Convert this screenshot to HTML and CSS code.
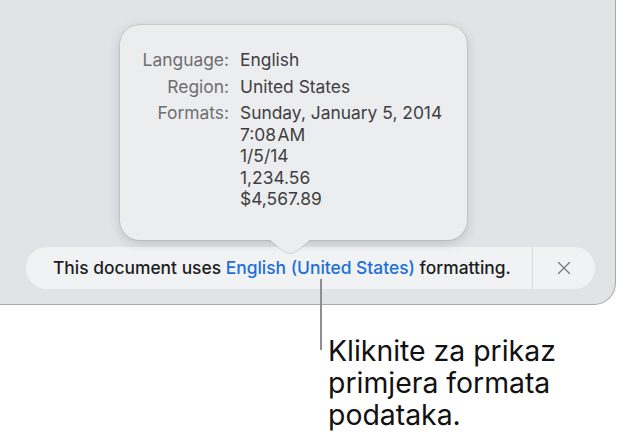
FILE: index.html
```html
<!DOCTYPE html>
<html>
<head>
<meta charset="utf-8">
<link rel="stylesheet" href="styles.css">
</head>
<body>
<div class="stage">
  <div class="window">
    <div class="popover">
      <div class="info">
        <div class="label">Language:</div>
        <div class="value">English</div>
        <div class="label">Region:</div>
        <div class="value">United States</div>
        <div class="label">Formats:</div>
        <div class="value">Sunday, January 5, 2014<br>7:08&#8202;AM<br>1/5/14<br>1,234.56<br>$4,567.89</div>
      </div>
      <svg class="arrow" width="40" height="14" viewBox="0 0 40 14">
        <path d="M0 0 L12 10 Q20 16 28 10 L40 0 Z" fill="#ecedef"/>
        <path d="M0 0.5 L12 10.5 Q20 16.5 28 10.5 L40 0.5" fill="none" stroke="rgba(0,0,0,0.12)" stroke-width="1"/>
      </svg>
    </div>
    <div class="bar">
      <p class="msg">This document uses <span class="link">English (United States)</span> formatting.</p>
      <div class="close">
        <svg width="14" height="14" viewBox="0 0 14 14"><path d="M1.5 1.5 L12.5 12.5 M12.5 1.5 L1.5 12.5" stroke="#7c7c7f" stroke-width="1.4" stroke-linecap="round"/></svg>
      </div>
    </div>
  </div>
  <div class="callout-line"></div>
  <p class="caption">Kliknite za prikaz<br>primjera formata<br>podataka.</p>
</div>
</body>
</html>
```

FILE: styles.css
```css
html, body {
  margin: 0;
  padding: 0;
  background: #ffffff;
}
body {
  font-family: Inter, "Noto Sans", "Liberation Sans", sans-serif;
  width: 619px;
  height: 438px;
  overflow: hidden;
}
.stage {
  position: relative;
  width: 619px;
  height: 438px;
}
.window {
  box-sizing: border-box;
  width: 616px;
  height: 305px;
  background: #e2e3e6;
  border-right: 1px solid #a9aaad;
  border-bottom: 1px solid #a9aaad;
  border-bottom-right-radius: 22px;
  padding-top: 25px;
  display: flex;
  flex-direction: column;
}
.popover {
  position: relative;
  box-sizing: border-box;
  margin-left: 120px;
  width: 347px;
  height: 215px;
  background: #ecedef;
  border-radius: 20px;
  box-shadow: 0 0 0 1px rgba(0,0,0,0.07), 0 3px 12px rgba(0,0,0,0.16);
  padding: 24px 0 0 20px;
}
.info {
  display: grid;
  grid-template-columns: 89px auto;
  column-gap: 11px;
  row-gap: 5px;
  font-size: 17.4px;
  line-height: 21.5px;
}
.label {
  text-align: right;
  color: #6f6f72;
}
.value {
  color: #404042;
}
.arrow {
  position: absolute;
  left: 150px;
  top: 215px;
  display: block;
}
.bar {
  box-sizing: border-box;
  margin-top: 7px;
  margin-left: 26px;
  width: 569px;
  height: 42px;
  background: #f1f2f4;
  border-radius: 21px;
  display: flex;
  align-items: center;
}
.msg {
  margin: 0;
  box-sizing: border-box;
  width: 507px;
  height: 42px;
  line-height: 42px;
  padding-left: 27px;
  border-right: 1px solid #dadbde;
  font-size: 17.4px;
  font-weight: 500;
  color: #1d1d1f;
  white-space: nowrap;
}
.link {
  color: #1d6fd8;
}
.close {
  flex: 1;
  display: flex;
  justify-content: center;
  align-items: center;
  height: 42px;
}
.close svg {
  display: block;
}
.callout-line {
  position: absolute;
  left: 320px;
  top: 279px;
  width: 2px;
  height: 71px;
  background: #8e8e90;
}
.caption {
  margin: 30px 0 0 328px;
  font-size: 28.4px;
  line-height: 32px;
  color: #111;
}
```
